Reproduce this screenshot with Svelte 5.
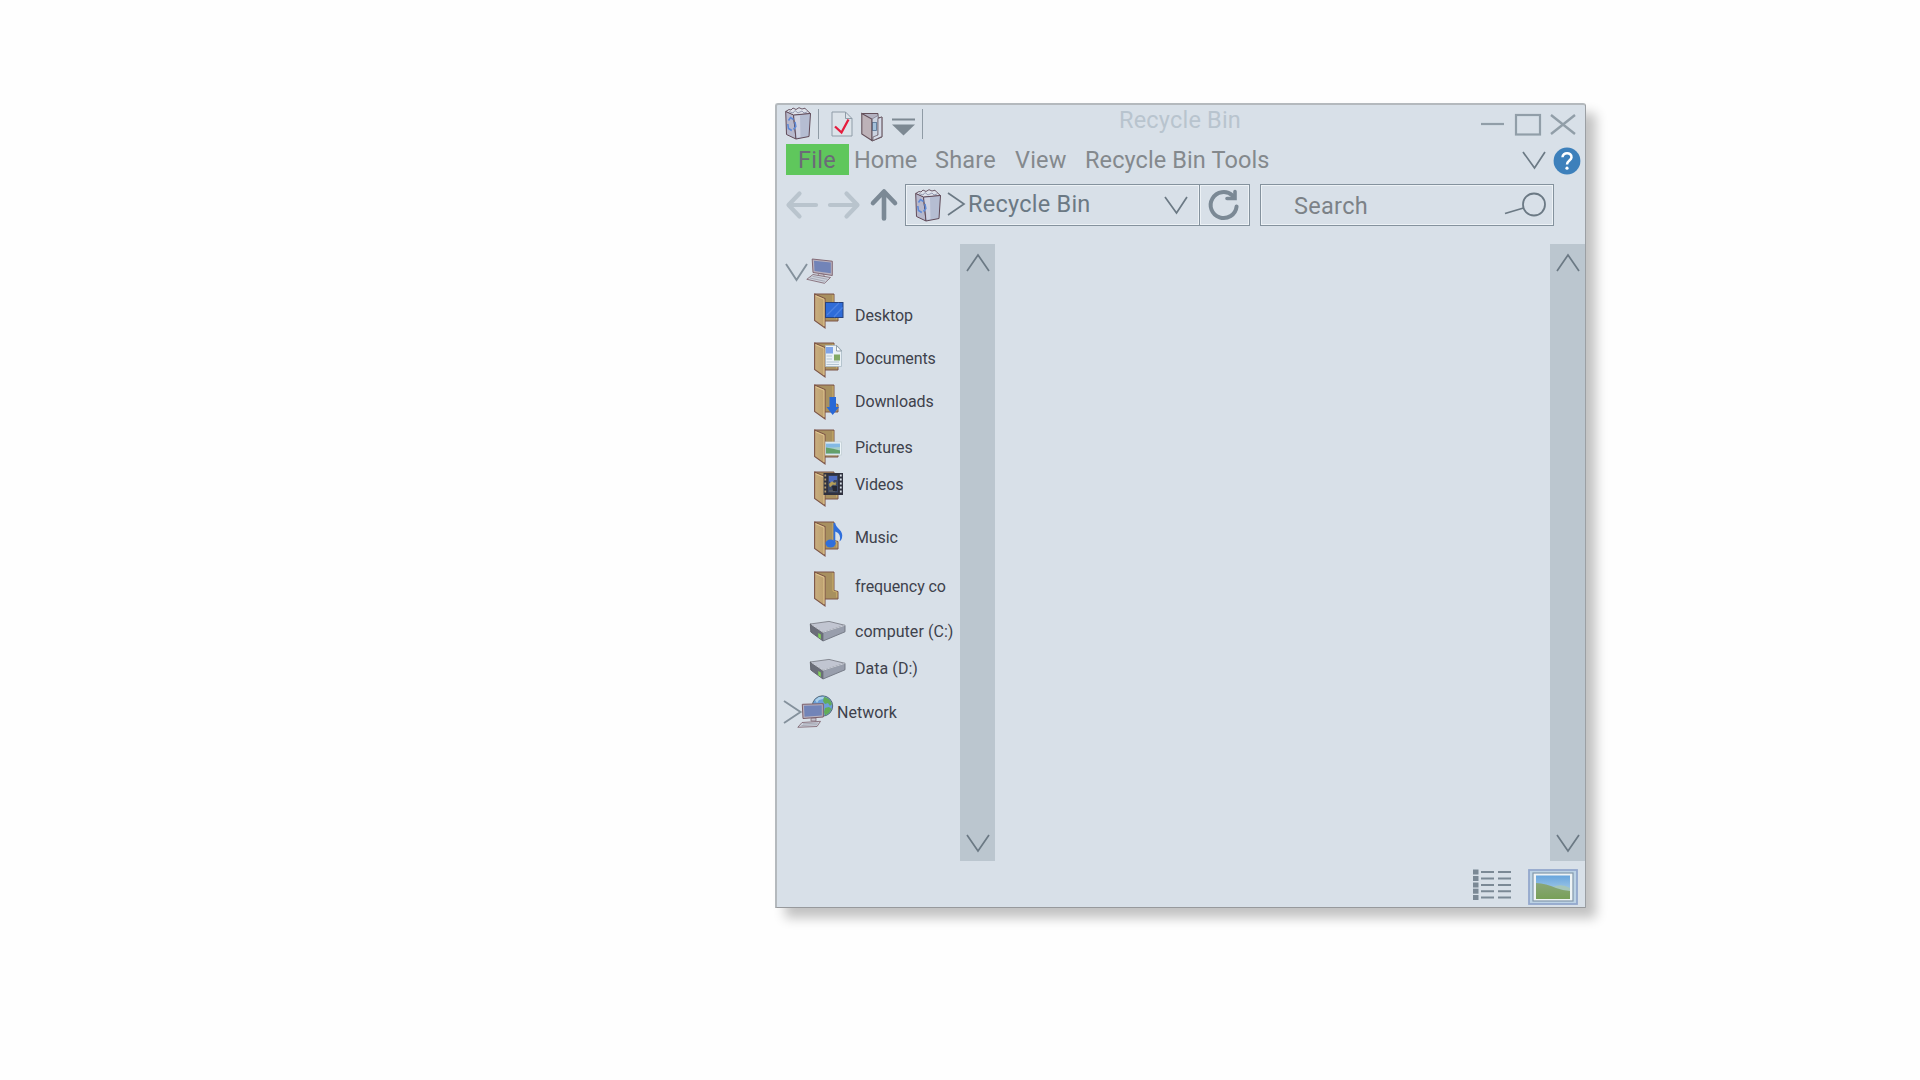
<script>
  const menus = [
    { label: 'Home', cls: 'home' },
    { label: 'Share', cls: 'share' },
    { label: 'View', cls: 'view' },
    { label: 'Recycle Bin Tools', cls: 'tools' }
  ];

  // gap: space above the row, drop: vertical offset of the label inside the row
  const places = [
    { label: 'Desktop', kind: 'desktop', gap: 9, drop: 13 },
    { label: 'Documents', kind: 'documents', gap: 13, drop: 7 },
    { label: 'Downloads', kind: 'downloads', gap: 6, drop: 8 },
    { label: 'Pictures', kind: 'pictures', gap: 9, drop: 9 },
    { label: 'Videos', kind: 'videos', gap: 6, drop: 4 },
    { label: 'Music', kind: 'music', gap: 14, drop: 7 },
    { label: 'frequency co', kind: 'plain', gap: 14, drop: 6 }
  ];
  const drives = [
    { label: 'computer (C:)', gap: 14, drop: 1 },
    { label: 'Data (D:)', gap: 17, drop: 0 }
  ];
</script>

{#snippet bin()}
  <svg class="bin" width="26" height="32" viewBox="0 0 26 32">
    <path d="M.7 3.500 4 1.500 6 2 8 0 11 1.500 14 -.3 17 1 20 .2 22 2.500 25.500 5.500 8.500 7.500Z" fill="#dde1ea" stroke="#604a58" stroke-width=".9" />
    <path d="M4 3.500 8 5 10 2.500 13 5 17 3 19 5 22 4" fill="none" stroke="#8f94ac" stroke-width=".9" />
    <path d="M.7 3.500 8.500 7 11 31 1.500 26.500Z" fill="#b7b8cc" stroke="#604a58" stroke-width="1" />
    <path d="M8.500 7 25.500 5.500 24 28.500 11 31Z" fill="#b5bdd2" stroke="#604a58" stroke-width="1" />
    <path d="M9.500 8 15 7.700 15.500 29 11.800 29.800Z" fill="#cfd2e2" />
    <path d="M3.500 12.500 5.500 9.500 8.500 11.500M10 14 10.800 18.500 8.500 21.500M6.800 22.500 3.500 20.500 2.800 16" fill="none" stroke="#5f8ad8" stroke-width="1.600" />
  </svg>
{/snippet}

{#snippet chevron(d, w, h)}
  <svg class="chevron" width={w} height={h} viewBox="0 0 {w} {h}"><path {d} /></svg>
{/snippet}

{#snippet folder(kind)}
  <svg width="30" height="36" viewBox="0 0 30 36">
    <defs>
      <linearGradient id="flap" x1="0" x2="1"><stop offset="0" stop-color="#c8ae80" /><stop offset="1" stop-color="#bd9f6d" /></linearGradient>
    </defs>
    <path d="M.6 1H20V19.500L24 20.500V28H10Z" fill="#a8905f" stroke="#7d5548" stroke-width="1" />
    <path d="M19 2V20L22.800 21V26.500" fill="none" stroke="#ccb06b" stroke-width="1" />
    <path d="M.6 1 11 5.500V35L.6 27.500Z" fill="url(#flap)" stroke="#7d5548" stroke-width="1.1" />
    <path d="M1.700 2.800 10 6.300V33" fill="none" stroke="#e6cd94" stroke-width=".9" />
    {#if kind === 'desktop'}
      <rect x="11.500" y="9.500" width="17.500" height="15" fill="#2f6cd8" stroke="#27427c" />
      <path d="M13 22 25 10M20 24 28.500 14.500" stroke="#4c82e2" stroke-width="1.3" />
    {:else if kind === 'documents'}
      <path d="M11.500 3.500H23L27.500 8.500V24.500H11.500Z" fill="#eaf1f6" stroke="#a9bac5" stroke-width=".8" />
      <path d="M22.500 3.500V9H27.500Z" fill="#fff" stroke="#7b8c98" stroke-width=".8" />
      <rect x="12" y="5" width="7" height="6.500" fill="#7fa4e8" />
      <rect x="20" y="12.500" width="6" height="6" fill="#82a965" />
      <path d="M12.500 14H18M12.500 17H18M12.500 20H25M12.500 22.500H25" stroke="#b4c5d3" />
    {:else if kind === 'downloads'}
      <path d="M15.500 13H22V23H25L18.700 31 12.500 23H15.500Z" fill="#2868d6" />
    {:else if kind === 'pictures'}
      <rect x="11.500" y="13" width="16" height="13" fill="#edf5f9" stroke="#c3cfd4" stroke-width=".8" />
      <rect x="12" y="14.500" width="14" height="10" fill="#83b9e4" />
      <path d="M12 18.500Q20 18.500 26 18V21H12Z" fill="#a9cfc9" />
      <path d="M12 18.500Q19 19.500 26 21.500V24.500H12Z" fill="#64a06a" />
    {:else if kind === 'videos'}
      <rect x="9.500" y="2" width="19.500" height="22" fill="#30323f" />
      <path d="M11.300 3.500V23" stroke="#b59d70" stroke-width="1.700" stroke-dasharray="2 2" />
      <path d="M26.800 3.500V23" stroke="#d8e0e8" stroke-width="1.800" stroke-dasharray="2 2" />
      <rect x="14" y="4.500" width="10" height="17" fill="#3c4965" />
      <path d="M15 5h8v4h-3l-2 4-3-3Z" fill="#4e6bc0" />
      <path d="M15 13 18 10.500 20 12 22 11.500 21.500 14 19 13.500 16 16ZM15 20h6" fill="#b59f58" stroke="#b59f58" stroke-width=".4" />
      <path d="M18 15h5v5h-4Z" fill="#252833" />
    {:else if kind === 'music'}
      <ellipse cx="16.500" cy="22.500" rx="5" ry="4" fill="#2f6fdc" />
      <path d="M19.500 2H21.200C22 8 30 9 28 17Q27 20 25.500 20.500Q28 13 21.300 10.500V23H19.500Z" fill="#2f6fdc" />
    {/if}
  </svg>
{/snippet}

{#snippet drive()}
  <svg width="36" height="21" viewBox="0 0 36 21">
    <path d="M.3 3 19 .4 35 4.300 13 11.500Z" fill="#c1c5d1" stroke="#74767f" stroke-width=".8" />
    <path d="M.3 3 13 11.500V20L.8 11Z" fill="#6b6e79" stroke="#5e6069" stroke-width=".9" />
    <path d="M13 11.500 35 4.300V10.800L13 20Z" fill="#989eac" stroke="#6f7580" stroke-width=".9" />
    <path d="M1.500 3.500 13 11.300 34.500 4.500" fill="none" stroke="#e1e4ec" stroke-width=".8" />
    <path d="M8.300 12 10.800 13.600V18L8.300 16.200Z" fill="#82d35a" />
  </svg>
{/snippet}

{#snippet scrollbar()}
  <div class="scroll">
    {@render chevron('M1 17 12 1 23 17', 24, 18)}
    {@render chevron('M1 1 12 17 23 1', 24, 18)}
  </div>
{/snippet}

<main>
  <section class="window">
    <header class="titlebar">
      {@render bin()}
      <i class="sep first"></i>
      <svg class="page" width="22" height="26" viewBox="0 0 22 26">
        <path d="M1 1H14.500L21 7.500V25H1Z" fill="#dce3e9" stroke="#8f9ca7" />
        <path d="M14.500 1V7.500H21" fill="none" stroke="#8f9ca7" />
        <path d="M4 15.500 10.500 21.500 17.500 8.500" fill="none" stroke="#e51c3d" stroke-width="2.300" />
      </svg>
      <svg class="props" width="22" height="30" viewBox="0 0 22 30">
        <path d="M.8 1.500H17V6L21 5V25L11 29 8 26Z" fill="#b3b1c0" stroke="#63505a" />
        <path d="M11 7 17 3.500V24L11 28Z" fill="#cbd3e1" stroke="#85828f" stroke-width=".8" />
        <rect x="11.500" y="10.500" width="4" height="8" fill="#a4c1db" stroke="#557292" stroke-width=".8" />
        <path d="M17 6.500 20.800 5V24.500L12 28.500V25L17 23Z" fill="#d5dbe8" stroke="#63505a" stroke-width=".7" />
        <path d="M.8 1.500 10.800 7V28.500L.8 22Z" fill="#bdb2b8" stroke="#63505a" stroke-width="1.100" />
      </svg>
      <svg class="more" width="23" height="18" viewBox="0 0 23 18">
        <path d="M0 1.500H23" stroke="#7d8993" stroke-width="2" />
        <path d="M0 6.500H23L11.500 17.500Z" fill="#7d8993" />
      </svg>
      <i class="sep second"></i>
      <h1>Recycle Bin</h1>
      <svg class="controls" width="96" height="24" viewBox="0 0 96 24" fill="none" stroke="#919ea8">
        <path d="M1 12H24" stroke-width="2.200" />
        <rect x="36" y="3" width="24" height="19.500" stroke-width="2.200" />
        <path d="M71 3 95 22M95 3 71 22" stroke-width="2.400" />
      </svg>
    </header>

    <nav class="menubar">
      <span class="file">File</span>
      {#each menus as m}
        <span class={m.cls}>{m.label}</span>
      {/each}
      <div class="help">
        {@render chevron('M1 1 12.500 17 23 1', 24, 18)}
        <svg width="28" height="28" viewBox="0 0 28 28">
          <circle cx="14" cy="14" r="13.400" fill="#3d80bb" />
          <path d="M9.500 10.300C9.500 4.800 18.800 5 18.500 10.400C18.300 13.400 14 13.800 14 17.500" fill="none" stroke="#fff" stroke-width="2.500" />
          <circle cx="14" cy="21.200" r="1.600" fill="#fff" />
        </svg>
      </div>
    </nav>

    <div class="address">
      <svg class="arrows" width="112" height="32" viewBox="0 0 112 32" fill="none" stroke-linecap="round" stroke-linejoin="round">
        <path d="M30 16H3M13.500 4.500 2.500 16 13.500 27.500" stroke="#b9c4cd" stroke-width="4.200" />
        <path d="M44 16H71M60.500 4.500 71.500 16 60.500 27.500" stroke="#b9c4cd" stroke-width="4.200" />
        <path d="M98 29.500V3M87 14 98 2.500 109 14" stroke="#7b8995" stroke-width="4.600" />
      </svg>
      <div class="box path">
        {@render bin()}
        {@render chevron('M1 1 17 12 1 23', 18, 24)}
        <span>Recycle Bin</span>
        {@render chevron('M1 1 12.500 17 23 1', 24, 18)}
      </div>
      <div class="box refresh">
        <svg width="30" height="32" viewBox="0 0 30 32">
          <path d="M23.500 6.500A13 13 0 1 0 27.600 17.500" fill="none" stroke="#7b8995" stroke-width="4" stroke-linecap="round" />
          <path d="M26 2.500V9.500H18" fill="none" stroke="#7b8995" stroke-width="3.600" stroke-linejoin="miter" stroke-linecap="round" />
        </svg>
      </div>
      <div class="box search">
        <span>Search</span>
        <svg width="42" height="26" viewBox="0 0 42 26" fill="none" stroke="#6b7984" stroke-width="1.800">
          <circle cx="30" cy="12.500" r="11" />
          <path d="M1 21.500 19.500 16" />
        </svg>
      </div>
    </div>

    <div class="content">
      <aside>
        <div class="root">
          {@render chevron('M1 1 11.500 17 22 1', 23, 18)}
          <svg class="pc" width="27" height="26" viewBox="0 0 27 26">
            <path d="M6.200 1 26.300 3.200V17.500L7 14.500Z" fill="#b9b2bf" stroke="#7a5e6a" stroke-width=".9" />
            <path d="M8 2.800 24.800 4.500V15.300L8.500 13Z" fill="#7284b8" />
            <path d="M13 15.500 18 16.500V18L19 20 11 18.500Z" fill="#d0d0d9" stroke="#7a5e6a" stroke-width=".7" />
            <path d="M7 16.500 24.500 19.500 18.500 25.300.8 21.300Z" fill="#cdd2dc" stroke="#7a5e6a" stroke-width=".8" />
            <path d="M4 20 19 23.300M6.500 18.300 21.500 21.300" stroke="#8e8e9c" stroke-width=".6" />
          </svg>
        </div>
        {#each places as p}
          <div class="row" style:--gap="{p.gap}px" style:--drop="{p.drop}px">
            {@render folder(p.kind)}
            <span>{p.label}</span>
          </div>
        {/each}
        {#each drives as d}
          <div class="row drive" style:--gap="{d.gap}px" style:--drop="{d.drop}px">
            {@render drive()}
            <span>{d.label}</span>
          </div>
        {/each}
        <div class="network">
          {@render chevron('M0 1 16.500 12 0 23', 18, 24)}
          <svg class="net" width="37" height="34" viewBox="0 0 37 34">
            <circle cx="25.500" cy="11" r="10.200" fill="#6b9fd9" stroke="#566a78" />
            <path d="M18 5 22 2 28 1.800 26 4 22 5 20 8Z" fill="#a9d0ea" />
            <path d="M27 2Q33 3 35 9L33 11 31 8 28 9 26 6ZM28 13 32 12 34.500 14 32 18 28 20.500 27 17Z" fill="#62ad58" />
            <path d="M5.300 9.300 26.300 8.700V22L6 23.500Z" fill="#b9b2bf" stroke="#7a5e6a" />
            <path d="M7 10.800 24.800 10.200V20.500L7.500 21.800Z" fill="#7284b8" />
            <path d="M14 23.300 19 23V26H14Z" fill="#c5c3ce" stroke="#7a5e6a" stroke-width=".7" />
            <path d="M5 27.500 23.500 26.300 20 31.500.8 32.300Z" fill="#cdd2dc" stroke="#7a5e6a" stroke-width=".8" />
            <path d="M4.500 30.500 20 29.700M6 28.900 21 28" stroke="#8e8e9c" stroke-width=".6" />
          </svg>
          <span>Network</span>
        </div>
      </aside>
      {@render scrollbar()}
      <div class="files"></div>
      {@render scrollbar()}
    </div>

    <footer>
      <svg width="38" height="32" viewBox="0 0 38 32">
        {#each [3, 9.500, 16, 22.200, 28.500] as y}
          <rect x="0" y={y - 2.500} width="5.500" height="5" fill="#7b8995" />
          <path d="M8 {y}H21M25 {y}H38" stroke="#7b8995" stroke-width="2" />
        {/each}
      </svg>
      <svg class="thumb" width="50" height="36" viewBox="0 0 50 36">
        <defs>
          <linearGradient id="sky" x2="0" y2="1"><stop offset="0" stop-color="#68a5dd" /><stop offset="1" stop-color="#c1dcec" /></linearGradient>
          <linearGradient id="hill" x2="0" y2="1"><stop offset="0" stop-color="#8aa678" /><stop offset="1" stop-color="#78a058" /></linearGradient>
        </defs>
        <rect x="1" y="1" width="48" height="34" fill="#bdd3e5" stroke="#93a8cd" stroke-width="1.800" />
        <rect x="5" y="4" width="40" height="28" fill="#eef3f5" stroke="#8298ab" stroke-width="1.200" />
        <rect x="8" y="6.500" width="34" height="23.500" fill="url(#sky)" />
        <path d="M24 18Q34 14 42 19V23Z" fill="#a6c6ba" />
        <path d="M8 14Q18 14.500 28 19Q35 21.500 42 22V30H8Z" fill="url(#hill)" />
      </svg>
    </footer>
  </section>
</main>

<style>
  :global(body) { background: #fff; overflow: hidden; }
  main {
    box-sizing: border-box;
    width: 1920px;
    height: 1080px;
    padding: 103px 0 0 775px;
    background: #fefefe;
    font-family: Roboto, 'Liberation Sans', sans-serif;
  }
  .window {
    box-sizing: border-box;
    width: 811px;
    height: 805px;
    display: flex;
    flex-direction: column;
    background: #d8e0e8;
    border: solid #b4b9bd;
    border-width: 2px 1px 1px 2px;
    border-right-color: #9b9fa3;
    border-bottom-color: #97999c;
    border-radius: 3px 3px 1px 1px;
    box-shadow: 10px 10px 12px rgba(0, 0, 0, 0.24);
  }
  svg { display: block; flex: none; overflow: visible; }
  span, h1 { white-space: nowrap; }
  .chevron path { fill: none; stroke: #6b7984; stroke-width: 1.7; }

  .titlebar { display: flex; height: 38px; align-items: flex-start; flex: none; }
  .titlebar .bin { margin: 3px 0 0 8px; }
  .sep { width: 1px; height: 30px; margin-top: 4px; background: #8f9ba5; }
  .first { margin-left: 7px; }
  .page { margin: 6px 0 0 12px; }
  .props { margin: 7px 0 0 8px; }
  .more { margin: 13px 0 0 9px; }
  .second { margin-left: 7px; }
  h1 {
    margin: 0 0 0 196px;
    width: 160px;
    font-size: 23.5px;
    line-height: 30px;
    letter-spacing: 0.2px;
    font-weight: 400;
    color: #b8c4ce;
  }
  .controls { margin: 7px 9px 0 auto; }

  .menubar {
    display: flex;
    height: 33px;
    flex: none;
    padding-left: 9px;
    font-size: 23.5px;
    line-height: 34px;
    color: #84898d;
  }
  .menubar span { box-sizing: border-box; height: 31px; }
  .file { width: 63px; margin-top: 1px; padding-left: 12px; line-height: 32px; letter-spacing: 0.3px; background: #5fc75c; color: #6b6b78; }
  .home { width: 81px; padding-left: 5px; }
  .share { width: 79px; padding-left: 5px; letter-spacing: 0.2px; }
  .view { width: 72px; padding-left: 6px; letter-spacing: 0.2px; }
  .tools { padding-left: 4px; letter-spacing: 0.1px; }
  .help { display: flex; gap: 7px; margin: 4px 4px 0 auto; }
  .help .chevron { margin-top: 4px; }

  .address { display: flex; height: 42px; margin-top: 8px; flex: none; font-size: 23.5px; }
  .arrows { margin: 5px 7px 0 9px; }
  .box {
    box-sizing: border-box;
    display: flex;
    height: 42px;
    border: 1px solid #84929d;
    box-shadow: inset 0 0 0 1px #edf2f6;
    line-height: 38px;
  }
  .path { width: 295px; color: #6b7984; letter-spacing: 0.25px; }
  .path .bin { margin: 5px 0 0 9px; }
  .path .bin + .chevron { margin: 7px 3px 0 6px; }
  .path span + .chevron { margin: 11px 11px 0 auto; }
  .refresh { width: 51px; margin-left: -1px; padding: 4px 0 0 9px; }
  .search { width: 294px; margin-left: 10px; padding-left: 33px; line-height: 42px; letter-spacing: 0.3px; color: #7c8287; }
  .search svg { margin: 7px 7px 0 auto; }

  .content { display: flex; height: 617px; margin-top: 18px; flex: none; }
  aside { width: 183px; flex: none; font-size: 16px; line-height: 20px; color: #3e424c; }
  .root { display: flex; height: 40px; padding-left: 8px; }
  .root .chevron { margin-top: 19px; }
  .root .chevron path, .network .chevron path { stroke: #84919c; stroke-width: 1.9; }
  .pc { margin: 14px 0 0 -2px; }
  .row { display: flex; height: 36px; margin-top: var(--gap); padding-left: 37px; }
  .row span { margin: var(--drop) 0 0 11px; letter-spacing: -0.1px; }
  .row.drive { height: 21px; padding-left: 33px; }
  .row.drive span { margin-left: 9px; letter-spacing: 0.05px; }
  .network { display: flex; padding-left: 7px; margin-top: 15px; }
  .network .chevron { margin-top: 5px; }
  .net { margin-left: -5px; }
  .network span { margin: 8px 0 0 3px; }
  .scroll {
    display: flex;
    flex-direction: column;
    justify-content: space-between;
    align-items: center;
    box-sizing: border-box;
    width: 35px;
    flex: none;
    padding: 10px 0 9px;
    background: #bbc6cf;
  }
  .files { flex: 1; }
  footer { display: flex; justify-content: flex-end; gap: 17px; padding: 8px 7px 0 0; }
  .thumb { margin-top: 0; }
</style>
